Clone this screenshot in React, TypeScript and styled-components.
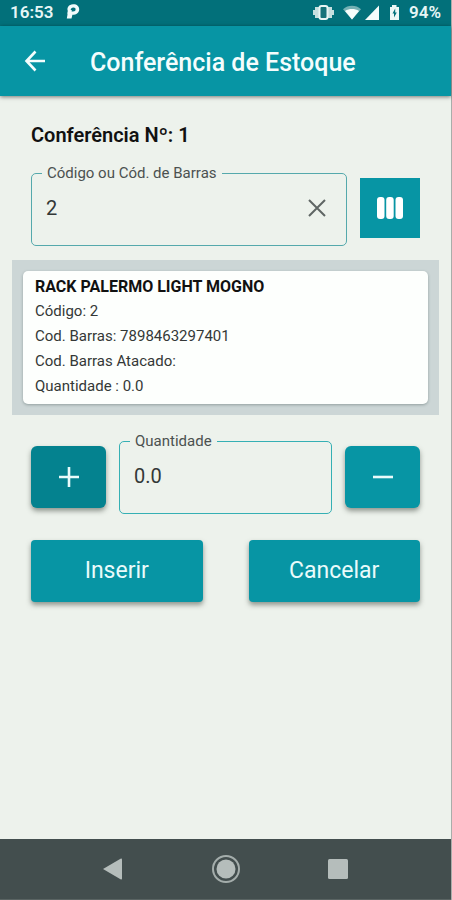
import React, { useState } from "react";
import styled, { createGlobalStyle } from "styled-components";

const teal = "#0795a4";

const GlobalStyle = createGlobalStyle`
  *, *::before, *::after { box-sizing: border-box; }
  body { margin: 0; background: #edf2ec; }
  button, input { font: inherit; color: inherit; }
`;

const Screen = styled.div`
  display: flex;
  flex-direction: column;
  min-height: 100vh;
  background: #edf2ec;
  border-right: 1px solid #a9adaa;
  color: #111;
  font-family: Roboto, sans-serif;
`;

const StatusBar = styled.div`
  display: flex;
  align-items: center;
  justify-content: space-between;
  height: 26px;
  padding: 0 10px;
  background: #02707a;
  color: #e6f6f6;
  font-size: 17px;
  font-weight: 600;
  line-height: 24px;
`;

const StatusGroup = styled.div<{ $gap: number }>`
  display: flex;
  align-items: center;
  gap: ${(p) => p.$gap}px;
  height: 26px;
  padding-bottom: 3px;
`;

const AppBar = styled.header`
  display: flex;
  align-items: center;
  gap: 32px;
  height: 70px;
  padding: 0 12px;
  background: ${teal};
  color: #f4fdfd;
  box-shadow: 0 1px 4px rgba(0, 0, 0, 0.5);
`;

const BackButton = styled.button`
  display: grid;
  place-items: center;
  width: 46px;
  height: 46px;
  padding: 0;
  border: 0;
  background: none;
`;

const Title = styled.h1`
  margin: 0;
  padding-top: 4px;
  font-size: 25px;
  font-weight: 500;
  line-height: 32px;
`;

const Content = styled.main`
  flex: 1;
  padding: 27px 12px;
`;

const Section = styled.section`
  padding: 0 19px;
`;

const Heading = styled.h2`
  margin: 0 0 16px;
  font-size: 20px;
  font-weight: 600;
  line-height: 24px;
`;

const FieldRow = styled.div`
  display: flex;
  align-items: flex-end;
  gap: 13px;
`;

const Outline = styled.fieldset<{ $color: string }>`
  flex: 1;
  display: flex;
  align-items: center;
  min-width: 0;
  height: 83px;
  margin: 0;
  padding: 0 14px 12px;
  border: 1px solid ${(p) => p.$color};
  border-radius: 5px;
`;

const Legend = styled.legend`
  margin-left: -4px;
  padding: 0 5px;
  font-size: 15px;
  line-height: 20px;
  color: #4b5150;
`;

const FieldBody = styled.div`
  display: flex;
  align-items: center;
  height: 50px;
  width: 100%;
`;

const TextInput = styled.input`
  flex: 1;
  min-width: 0;
  padding: 0;
  border: 0;
  outline: 0;
  background: none;
  color: #333837;
  font-size: 20px;
  line-height: 24px;
`;

const ClearButton = styled.button`
  display: grid;
  place-items: center;
  width: 30px;
  height: 30px;
  padding: 0;
  border: 0;
  background: none;
  color: #5f6664;
`;

const ScanButton = styled.button`
  display: grid;
  place-items: center;
  width: 60px;
  height: 60px;
  margin-bottom: 8px;
  padding: 0;
  border: 0;
  background: ${teal};
  color: #fff;
`;

const ProductPanel = styled.section`
  margin: 14px 0 16px;
  padding: 11px;
  background: #ccd6d6;
`;

const ProductCard = styled.article`
  padding: 4px 12px 5px;
  border-radius: 5px;
  background: #fdfffd;
  box-shadow: 0 1px 3px rgba(60, 80, 80, 0.4);
`;

const ProductName = styled.h3`
  margin: 0;
  font-size: 16px;
  font-weight: 700;
  line-height: 24px;
  color: #111;
`;

const ProductLine = styled.p`
  margin: 0;
  font-size: 15px;
  line-height: 25px;
  color: #343837;
`;

const Raised = styled.button`
  display: grid;
  place-items: center;
  height: 62px;
  padding: 0;
  border: 0;
  background: ${teal};
  color: #e9fbfb;
  box-shadow: 0 3px 5px rgba(50, 60, 50, 0.5);
`;

const StepButton = styled(Raised)<{ $pressed?: boolean }>`
  width: 75px;
  margin-bottom: 6px;
  border-radius: 6px;
  background: ${(p) => (p.$pressed ? "#04828f" : teal)};
`;

const Actions = styled.div`
  display: grid;
  grid-template-columns: 1fr 1fr;
  gap: 46px;
  margin-top: 26px;
`;

const ActionButton = styled(Raised)`
  border-radius: 4px;
  font-size: 23px;
  line-height: 28px;
`;

const NavBar = styled.nav`
  display: grid;
  grid-template-columns: repeat(3, 1fr);
  height: 61px;
  padding: 0 12.5%;
  background: #434e4e;
  border-bottom: 1px solid #5a6463;
`;

const NavButton = styled.button`
  display: grid;
  place-items: center;
  padding: 0;
  border: 0;
  background: none;
  color: #b5bdbb;
`;

export default function App() {
  const [code, setCode] = useState("2");
  const [quantity, setQuantity] = useState("0.0");
  const step = (by: number) =>
    setQuantity(Math.max(0, (parseFloat(quantity) || 0) + by).toFixed(1));

  return (
    <Screen>
      <GlobalStyle />
      <StatusBar>
        <StatusGroup $gap={13}>
          <span>16:53</span>
          <svg width="14" height="17" viewBox="0 0 14 17" aria-hidden="true">
            <path
              fill="#f2fbfb"
              fillRule="evenodd"
              d="M7 1.2C10.8 1 13.2 3.1 13.2 6.2C13.2 9.7 10.6 11.8 6.4 11.8L5.5 15.4H.8L1.5 11.4C1.2 10.8 1.4 9.6 1.8 8.1C.6 4.4 2.7 1.4 7 1.2ZM7.4 4.4C5.8 4.4 4.8 5.5 4.7 7.1L5.8 7.1L5.6 8.6H7C8.8 8.6 9.6 7.6 9.6 6.3C9.6 5.1 8.8 4.4 7.4 4.4Z"
            />
          </svg>
        </StatusGroup>
        <StatusGroup $gap={9}>
          <svg width="88" height="18" viewBox="0 0 88 18" aria-hidden="true">
            <g fill="#c5dfdf">
              <rect x="1" y="7" width="2" height="5" />
              <rect x="3" y="4" width="4" height="11" />
              <rect x="16" y="4" width="4" height="11" />
              <rect x="20" y="7" width="2" height="5" />
            </g>
            <rect x="7.5" y="3" width="8" height="13" rx="2" fill="#16737a" stroke="#e8f5f4" strokeWidth="2" />
            <path d="M31 6.3C36 1.7 44 1.7 49 6.3L40 16.5Z" fill="#75b1b4" />
            <path d="M33 8C37.2 5.4 42.8 5.4 47 8L40 16.5Z" fill="#f5fcfb" />
            <path d="M53 17H67V2.5Z" fill="#f5fcfb" />
            <path d="M78 4H80V2H84.5V4H87V17H78Z" fill="#eef8f6" />
            <path d="M83.2 5.5L80.5 10.5H82V14.5L84.8 9.5H83.2Z" fill="#02707a" />
          </svg>
          <span>94%</span>
        </StatusGroup>
      </StatusBar>
      <AppBar>
        <BackButton aria-label="Voltar">
          <svg width="22" height="22" viewBox="0 0 22 22" fill="none" stroke="currentColor" strokeWidth="2.6">
            <path d="M21 11H3M11.5 1.5L2.5 11L11.5 20.5" />
          </svg>
        </BackButton>
        <Title>Conferência de Estoque</Title>
      </AppBar>
      <Content>
        <Section>
          <Heading>Conferência Nº: 1</Heading>
          <FieldRow>
            <Outline $color="#55a9ac">
              <Legend>
                <label htmlFor="code">Código ou Cód. de Barras</label>
              </Legend>
              <FieldBody>
                <TextInput id="code" value={code} onChange={(e) => setCode(e.target.value)} />
                <ClearButton aria-label="Limpar" onClick={() => setCode("")}>
                  <svg width="18" height="18" viewBox="0 0 18 18" fill="none" stroke="currentColor" strokeWidth="2">
                    <path d="M1 1L17 17M17 1L1 17" />
                  </svg>
                </ClearButton>
              </FieldBody>
            </Outline>
            <ScanButton aria-label="Ler código de barras">
              <svg width="28" height="22" viewBox="0 0 28 22" fill="currentColor">
                <rect x="1" y="0" width="7.5" height="22" rx="3" />
                <rect x="10.2" y="0" width="7.5" height="22" rx="3" />
                <rect x="19.5" y="0" width="7.5" height="22" rx="3" />
              </svg>
            </ScanButton>
          </FieldRow>
        </Section>
        <ProductPanel>
          <ProductCard>
            <ProductName>RACK PALERMO LIGHT MOGNO</ProductName>
            <ProductLine>Código: 2</ProductLine>
            <ProductLine>Cod. Barras: 7898463297401</ProductLine>
            <ProductLine>Cod. Barras Atacado:</ProductLine>
            <ProductLine>Quantidade : 0.0</ProductLine>
          </ProductCard>
        </ProductPanel>
        <Section>
          <FieldRow>
            <StepButton $pressed aria-label="Aumentar" onClick={() => step(1)}>
              <svg width="20" height="20" viewBox="0 0 20 20" stroke="currentColor" strokeWidth="2.6">
                <path d="M0 10H20M10 0V20" />
              </svg>
            </StepButton>
            <Outline $color="#35b0b4">
              <Legend>
                <label htmlFor="quantity">Quantidade</label>
              </Legend>
              <FieldBody>
                <TextInput
                  id="quantity"
                  inputMode="decimal"
                  value={quantity}
                  onChange={(e) => setQuantity(e.target.value)}
                />
              </FieldBody>
            </Outline>
            <StepButton aria-label="Diminuir" onClick={() => step(-1)}>
              <svg width="20" height="20" viewBox="0 0 20 20" stroke="currentColor" strokeWidth="2.6">
                <path d="M0 10H20" />
              </svg>
            </StepButton>
          </FieldRow>
          <Actions>
            <ActionButton>Inserir</ActionButton>
            <ActionButton>Cancelar</ActionButton>
          </Actions>
        </Section>
      </Content>
      <NavBar>
        <NavButton aria-label="Voltar">
          <svg width="22" height="24" viewBox="0 0 22 24" fill="currentColor">
            <path d="M1 12L18.5 1.8Q20 1 20 2.5V21.5Q20 23 18.5 22.2Z" />
          </svg>
        </NavButton>
        <NavButton aria-label="Início">
          <svg width="30" height="30" viewBox="0 0 30 30">
            <circle cx="15" cy="15" r="13" fill="none" stroke="#a4adab" strokeWidth="2" />
            <circle cx="15" cy="15" r="9.5" fill="currentColor" />
          </svg>
        </NavButton>
        <NavButton aria-label="Recentes">
          <svg width="20" height="20" viewBox="0 0 20 20" fill="currentColor">
            <rect width="20" height="20" rx="1.5" />
          </svg>
        </NavButton>
      </NavBar>
    </Screen>
  );
}
